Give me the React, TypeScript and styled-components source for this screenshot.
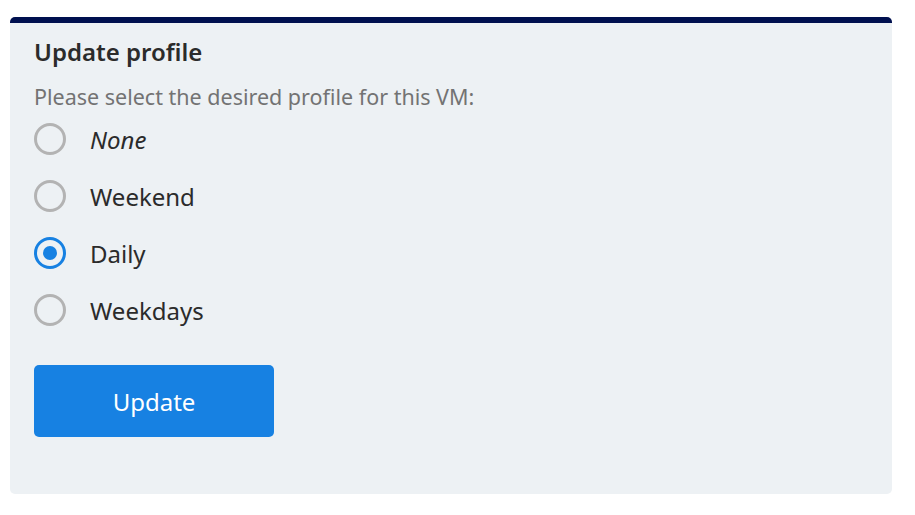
import { useState } from 'react'
import styled, { createGlobalStyle } from 'styled-components'

const GlobalStyle = createGlobalStyle`
  html, body {
    margin: 0;
    padding: 0;
    background: #ffffff;
    font-family: 'Noto Sans', 'Open Sans', sans-serif;
  }
`

const Page = styled.div`
  padding: 17px 23px 22px 10px;
`

const Panel = styled.div`
  background: #edf1f4;
  border-top: 6px solid #00104f;
  border-radius: 5px;
  height: 477px;
  box-sizing: border-box;
  padding: 12px 24px 0;
`

const Title = styled.h2`
  margin: 0;
  font-size: 24px;
  font-weight: 600;
  color: #2b2b2b;
  line-height: 34px;
`

const Hint = styled.p`
  margin: 14px 0 0;
  font-size: 21.5px;
  color: #737373;
  line-height: 28px;
`

const Options = styled.div`
  display: flex;
  flex-direction: column;
  gap: 25px;
  margin-top: 12px;
`

const Option = styled.label`
  display: flex;
  align-items: center;
  gap: 24px;
  height: 32px;
  cursor: pointer;
`

const Radio = styled.span<{ $checked: boolean }>`
  width: 32px;
  height: 32px;
  box-sizing: border-box;
  border-radius: 50%;
  border: 3px solid ${(p) => (p.$checked ? '#1781e2' : '#b3b3b3')};
  display: flex;
  align-items: center;
  justify-content: center;
  flex-shrink: 0;

  &::after {
    content: '';
    width: 14px;
    height: 14px;
    border-radius: 50%;
    background: #1781e2;
    display: ${(p) => (p.$checked ? 'block' : 'none')};
  }
`

const OptionLabel = styled.span<{ $italic?: boolean }>`
  font-size: 24px;
  color: #2b2b2b;
  font-style: ${(p) => (p.$italic ? 'italic' : 'normal')};
`

const Button = styled.button`
  margin-top: 39px;
  width: 240px;
  height: 72px;
  border: none;
  border-radius: 5px;
  background: #1781e2;
  color: #ffffff;
  font-family: inherit;
  font-size: 24px;
  cursor: pointer;
`

const profiles = [
  { id: 'none', label: 'None', italic: true },
  { id: 'weekend', label: 'Weekend' },
  { id: 'daily', label: 'Daily' },
  { id: 'weekdays', label: 'Weekdays' },
]

export default function App() {
  const [selected, setSelected] = useState('daily')

  return (
    <Page>
      <GlobalStyle />
      <Panel>
        <Title>Update profile</Title>
        <Hint>Please select the desired profile for this VM:</Hint>
        <Options>
          {profiles.map((p) => (
            <Option key={p.id} onClick={() => setSelected(p.id)}>
              <Radio $checked={selected === p.id} />
              <OptionLabel $italic={p.italic}>{p.label}</OptionLabel>
            </Option>
          ))}
        </Options>
        <Button>Update</Button>
      </Panel>
    </Page>
  )
}
